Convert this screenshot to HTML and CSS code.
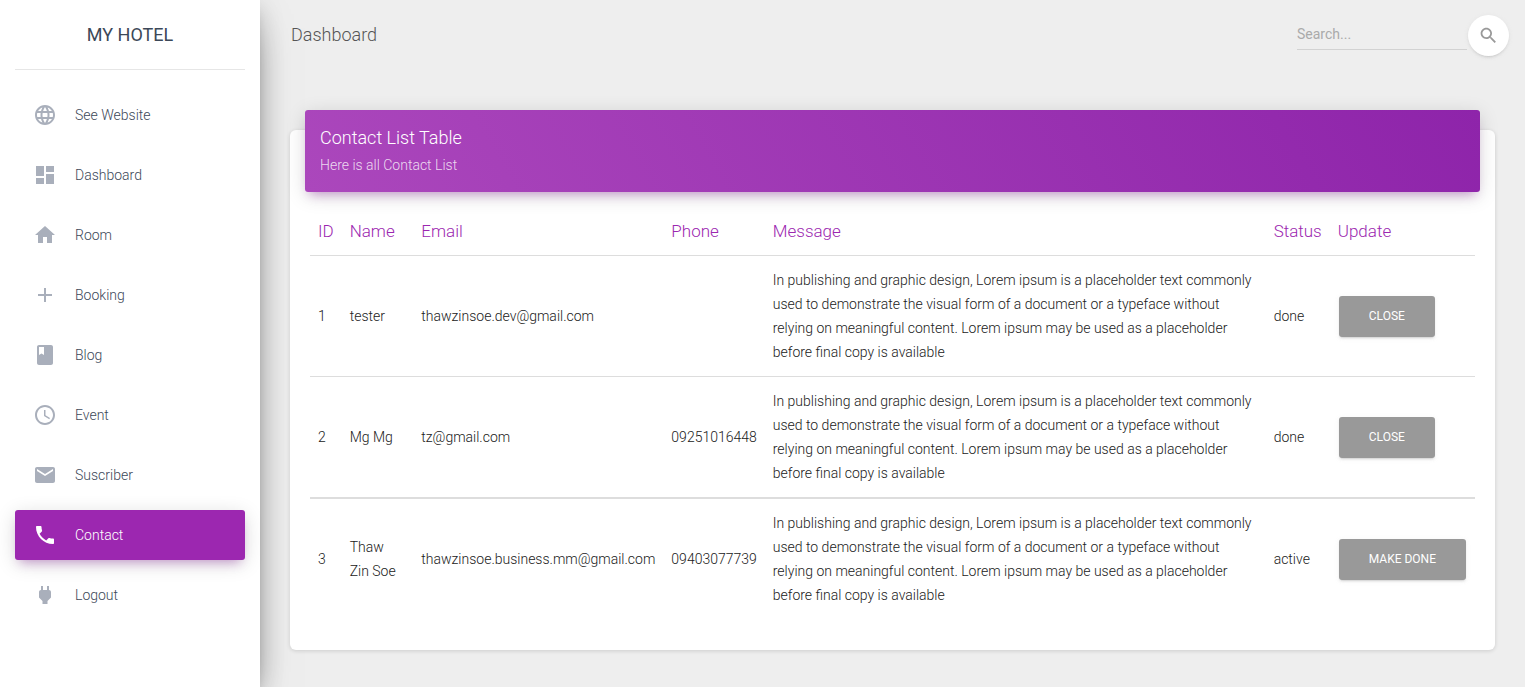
FILE: index.html
```html
<!DOCTYPE html>
<html lang="en">
<head>
<meta charset="utf-8">
<meta name="viewport" content="width=device-width, initial-scale=1">
<title>My Hotel</title>
<link rel="stylesheet" href="styles.css">
</head>
<body>
<div class="layout">
  <aside class="sidebar">
    <div class="logo"><a href="#">MY HOTEL</a></div>
    <nav class="nav">
      <a class="nav-link" href="#"><svg class="icon" viewBox="0 0 24 24"><path d="M11.99 2C6.47 2 2 6.48 2 12s4.47 10 9.99 10C17.52 22 22 17.52 22 12S17.52 2 11.99 2zm6.93 6h-2.95c-.32-1.25-.78-2.45-1.38-3.56 1.84.63 3.37 1.91 4.33 3.56zM12 4.04c.83 1.2 1.48 2.53 1.91 3.96h-3.82c.43-1.43 1.08-2.76 1.91-3.96zM4.26 14C4.1 13.36 4 12.69 4 12s.1-1.36.26-2h3.38c-.08.66-.14 1.32-.14 2s.06 1.34.14 2H4.26zm.82 2h2.95c.32 1.25.78 2.45 1.38 3.56-1.84-.63-3.37-1.9-4.33-3.56zm2.95-8H5.08c.96-1.66 2.49-2.93 4.33-3.56C8.81 5.55 8.35 6.75 8.03 8zM12 19.96c-.83-1.2-1.48-2.53-1.91-3.96h3.82c-.43 1.43-1.08 2.76-1.91 3.96zM14.34 14H9.66c-.09-.66-.16-1.32-.16-2s.07-1.35.16-2h4.68c.09.65.16 1.32.16 2s-.07 1.34-.16 2zm.25 5.56c.6-1.11 1.06-2.31 1.38-3.56h2.95c-.96 1.65-2.49 2.93-4.33 3.56zM16.36 14c.08-.66.14-1.32.14-2s-.06-1.34-.14-2h3.38c.16.64.26 1.31.26 2s-.1 1.36-.26 2h-3.38z"/></svg>See Website</a>
      <a class="nav-link" href="#"><svg class="icon" viewBox="0 0 24 24"><path d="M3 13h8V3H3v10zm0 8h8v-6H3v6zm10 0h8V11h-8v10zm0-18v6h8V3h-8z"/></svg>Dashboard</a>
      <a class="nav-link" href="#"><svg class="icon" viewBox="0 0 24 24"><path d="M10 20v-6h4v6h5v-8h3L12 3 2 12h3v8z"/></svg>Room</a>
      <a class="nav-link" href="#"><svg class="icon" viewBox="0 0 24 24"><path d="M19 13h-6v6h-2v-6H5v-2h6V5h2v6h6v2z"/></svg>Booking</a>
      <a class="nav-link" href="#"><svg class="icon" viewBox="0 0 24 24"><path d="M18 2H6c-1.1 0-2 .9-2 2v16c0 1.1.9 2 2 2h12c1.1 0 2-.9 2-2V4c0-1.1-.9-2-2-2zM6 4h5v8l-2.500-1.500L6 12V4z"/></svg>Blog</a>
      <a class="nav-link" href="#"><svg class="icon" viewBox="0 0 24 24"><path d="M11.990 2C6.470 2 2 6.480 2 12s4.470 10 9.990 10C17.520 22 22 17.520 22 12S17.520 2 11.990 2zM12 20c-4.420 0-8-3.580-8-8s3.580-8 8-8 8 3.580 8 8-3.580 8-8 8zm.5-13H11v6l5.250 3.150.75-1.230-4.500-2.670z"/></svg>Event</a>
      <a class="nav-link" href="#"><svg class="icon" viewBox="0 0 24 24"><path d="M20 4H4c-1.100 0-1.990.9-1.990 2L2 18c0 1.100.9 2 2 2h16c1.100 0 2-.9 2-2V6c0-1.100-.9-2-2-2zm0 4l-8 5-8-5V6l8 5 8-5v2z"/></svg>Suscriber</a>
      <a class="nav-link nav-link-active" href="#" aria-current="page"><svg class="icon" viewBox="0 0 24 24"><path d="M6.620 10.790c1.440 2.830 3.760 5.140 6.590 6.590l2.200-2.200c.27-.27.67-.36 1.020-.24 1.120.37 2.330.57 3.570.57.55 0 1 .45 1 1V20c0 .55-.45 1-1 1-9.390 0-17-7.610-17-17 0-.55.45-1 1-1h3.500c.55 0 1 .45 1 1 0 1.250.2 2.450.57 3.570.11.35.03.74-.25 1.020l-2.200 2.200z"/></svg>Contact</a>
      <a class="nav-link" href="#"><svg class="icon" viewBox="0 0 24 24"><path d="M16.010 7L16 3h-2v4h-4V3H8v4h-.01C7 6.990 6 7.990 6 8.990v5.490L9.500 18v3h5v-3l3.500-3.510v-5.500c0-1-1-2-1.990-1.990z"/></svg>Logout</a>
    </nav>
  </aside>

  <div class="main">
    <header class="topbar">
      <a class="page-title" href="#">Dashboard</a>
      <form class="search">
        <input class="search-input" type="text" placeholder="Search..." aria-label="Search">
        <button class="search-button" type="button" aria-label="Submit search"><svg class="search-icon" viewBox="0 0 24 24"><path d="M15.500 14h-.79l-.28-.27C15.410 12.590 16 11.110 16 9.500 16 5.910 13.090 3 9.500 3S3 5.910 3 9.500 5.910 16 9.500 16c1.610 0 3.090-.59 4.230-1.570l.27.28v.79l5 4.990L20.490 19l-4.990-5zm-6 0C7.010 14 5 11.990 5 9.500S7.010 5 9.500 5 14 7.010 14 9.500 11.990 14 9.500 14z"/></svg></button>
      </form>
    </header>

    <main class="content">
      <section class="card">
        <div class="card-header">
          <h1 class="card-title">Contact List Table</h1>
          <p class="card-subtitle">Here is all Contact List</p>
        </div>
        <div class="card-body">
          <table class="table">
            <thead>
              <tr><th>ID</th><th>Name</th><th>Email</th><th>Phone</th><th>Message</th><th>Status</th><th>Update</th></tr>
            </thead>
            <tbody>
              <tr>
                <td>1</td><td>tester</td><td>thawzinsoe.dev@gmail.com</td><td></td>
                <td>In publishing and graphic design, Lorem ipsum is a placeholder text commonly used to demonstrate the visual form of a document or a typeface without relying on meaningful content. Lorem ipsum may be used as a placeholder before final copy is available</td>
                <td>done</td><td><button class="btn" type="button">Close</button></td>
              </tr>
              <tr>
                <td>2</td><td>Mg Mg</td><td>tz@gmail.com</td><td>09251016448</td>
                <td>In publishing and graphic design, Lorem ipsum is a placeholder text commonly used to demonstrate the visual form of a document or a typeface without relying on meaningful content. Lorem ipsum may be used as a placeholder before final copy is available</td>
                <td>done</td><td><button class="btn" type="button">Close</button></td>
              </tr>
              <tr>
                <td>3</td><td>Thaw Zin Soe</td><td>thawzinsoe.business.mm@gmail.com</td><td>09403077739</td>
                <td>In publishing and graphic design, Lorem ipsum is a placeholder text commonly used to demonstrate the visual form of a document or a typeface without relying on meaningful content. Lorem ipsum may be used as a placeholder before final copy is available</td>
                <td>active</td><td><button class="btn" type="button">Make Done</button></td>
              </tr>
            </tbody>
          </table>
        </div>
      </section>
    </main>
  </div>
</div>
</body>
</html>
```
FILE: styles.css
```css
* {
  box-sizing: border-box;
}

body {
  margin: 0;
  background: #eeeeee;
  color: #212121;
  font-family: Roboto, "Liberation Sans", sans-serif;
  font-size: 14px;
  font-weight: 300;
  line-height: 24px;
}

a {
  color: inherit;
  text-decoration: none;
}

.layout {
  display: flex;
  min-height: 100vh;
}

/* Sidebar */
.sidebar {
  flex: 0 0 260px;
  padding: 0 15px;
  background: #ffffff;
  color: #3c4858;
  box-shadow: 0 16px 38px -12px rgba(0, 0, 0, 0.56),
    0 4px 25px 0 rgba(0, 0, 0, 0.12),
    0 8px 10px -5px rgba(0, 0, 0, 0.2);
}

.logo {
  padding: 20px 0;
  border-bottom: 1px solid #e6e6e6;
  font-size: 18px;
  font-weight: 400;
  line-height: 29px;
  text-align: center;
}

.nav {
  display: flex;
  flex-direction: column;
  gap: 10px;
  padding-top: 20px;
}

.nav-link {
  display: flex;
  align-items: center;
  gap: 18px;
  padding: 10px 18px;
  border-radius: 3px;
  line-height: 30px;
}

.nav-link-active {
  background: #9c27b0;
  color: #ffffff;
  box-shadow: 0 4px 20px 0 rgba(0, 0, 0, 0.14),
    0 7px 10px -5px rgba(156, 39, 176, 0.4);
}

.icon {
  width: 24px;
  height: 24px;
  fill: #a9afbb;
}

.nav-link-active .icon {
  fill: #ffffff;
}

/* Top bar */
.main {
  flex: 1;
  min-width: 0;
}

.topbar {
  display: flex;
  align-items: flex-start;
  justify-content: space-between;
  padding: 15px 16px 15px 31px;
}

.page-title {
  color: #555555;
  font-size: 18px;
  line-height: 39px;
}

.search {
  display: flex;
  align-items: flex-start;
  gap: 1px;
}

.search-input {
  width: 170px;
  height: 35px;
  padding: 3px 0 0;
  border: 0;
  border-bottom: 1px solid #d2d2d2;
  background: transparent;
  font: 400 14px/20px Roboto, "Liberation Sans", sans-serif;
}

.search-input::placeholder {
  color: #aaaaaa;
}

.search-button {
  display: flex;
  align-items: center;
  justify-content: center;
  width: 41px;
  height: 41px;
  padding: 0;
  border: 0;
  border-radius: 50%;
  background: #ffffff;
  box-shadow: 0 2px 2px 0 rgba(153, 153, 153, 0.14),
    0 3px 1px -2px rgba(153, 153, 153, 0.2),
    0 1px 5px 0 rgba(153, 153, 153, 0.12);
}

.search-icon {
  width: 21px;
  height: 21px;
  fill: #999999;
}

/* Contact list */
.content {
  padding: 59px 30px 36px;
}

.card {
  display: flex;
  flex-direction: column;
  border-radius: 6px;
  background: #ffffff;
  box-shadow: 0 1px 4px 0 rgba(0, 0, 0, 0.14);
}

.card-header {
  margin: -20px 15px 0;
  padding: 15px;
  border-radius: 3px;
  background: linear-gradient(60deg, #ab47bc, #8e24aa);
  color: #ffffff;
  box-shadow: 0 4px 20px 0 rgba(0, 0, 0, 0.14),
    0 7px 10px -5px rgba(156, 39, 176, 0.4);
}

.card-title {
  margin: 0 0 2px;
  font-size: 18px;
  font-weight: 300;
  line-height: 26px;
}

.card-subtitle {
  margin: 0;
  color: rgba(255, 255, 255, 0.8);
}

.card-body {
  padding: 15px 20px 31px;
}

.table {
  width: 100%;
  border-spacing: 0;
}

.table th,
.table td {
  padding: 12px 8px;
  text-align: left;
  vertical-align: middle;
}

.table th {
  color: #9c27b0;
  font-size: 17px;
  font-weight: 300;
}

.table td {
  border-top: 1px solid #dddddd;
}

.table tbody tr:last-child td {
  border-top-width: 2px;
}

.btn {
  display: block;
  margin: 0 1px;
  padding: 12px 30px;
  border: 0;
  border-radius: 3px;
  background: #999999;
  color: #ffffff;
  font: 400 12px/17px Roboto, "Liberation Sans", sans-serif;
  text-transform: uppercase;
  white-space: nowrap;
  box-shadow: 0 2px 2px 0 rgba(153, 153, 153, 0.14),
    0 3px 1px -2px rgba(153, 153, 153, 0.2),
    0 1px 5px 0 rgba(153, 153, 153, 0.12);
}
```
